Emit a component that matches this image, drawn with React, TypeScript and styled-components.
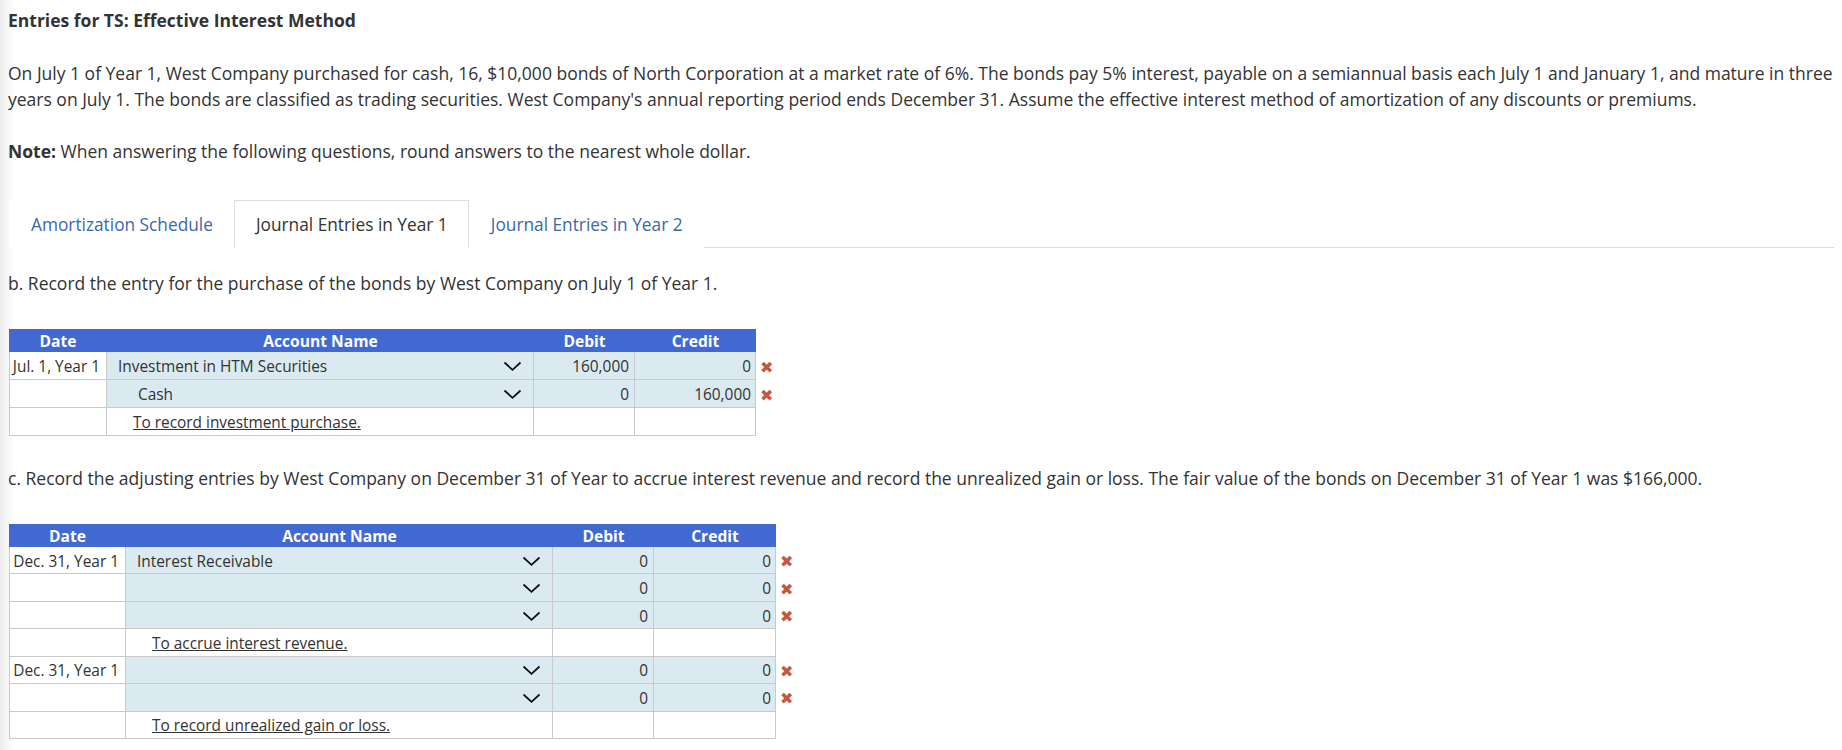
import React from "react";
import styled, { createGlobalStyle } from "styled-components";

const Global = createGlobalStyle`
  html, body { margin: 0; padding: 0; }
  body {
    background: linear-gradient(to right, #ebebeb 0px, #f8f8f8 8px, #ffffff 16px);
    font-family: "Open Sans", "Liberation Sans", sans-serif;
    color: #333333;
    min-height: 750px;
  }
`;

const Page = styled.div`
  padding: 8px 8px 0 8px;
`;

const Title = styled.h1`
  margin: 0;
  font-size: 17.5px;
  font-weight: 700;
  line-height: 24px;
  color: #333;
`;

const Para = styled.p<{ $top: number }>`
  margin: ${(p) => p.$top}px 0 0 0;
  font-size: 17.5px;
  line-height: 26px;
  color: #333;
`;

const TabBar = styled.div`
  margin: 36px 0 0 1px;
  display: flex;
  border-bottom: 1px solid #dddddd;
  height: 47px;
`;

const Tab = styled.div<{ $active?: boolean }>`
  box-sizing: border-box;
  height: 48px;
  padding: 0 20px 0 21px;
  display: flex;
  align-items: center;
  font-size: 17.3px;
  color: ${(p) => (p.$active ? "#333333" : "#3b67ab")};
  background: #fff;
  border: 1px solid ${(p) => (p.$active ? "#dddddd" : "transparent")};
  border-bottom-color: ${(p) => (p.$active ? "#ffffff" : "transparent")};
`;

const Prompt = styled.p<{ $top: number }>`
  margin: ${(p) => p.$top}px 0 0 0;
  font-size: 17.5px;
  line-height: 24px;
  color: #333;
`;

const Table = styled.div<{ $top: number }>`
  margin: ${(p) => p.$top}px 0 0 1px;
  font-size: 15.4px;
`;

const Row = styled.div<{ $cols: string; $h: number }>`
  display: grid;
  grid-template-columns: ${(p) => p.$cols};
  height: ${(p) => p.$h}px;
`;

const HeadCell = styled.div`
  background: #4169d1;
  color: #fff;
  font-weight: 700;
  display: flex;
  align-items: center;
  justify-content: center;
  font-size: 15.6px;
`;

const Cell = styled.div<{ $fill?: boolean; $first?: boolean; $align?: string; $pad?: string }>`
  box-sizing: border-box;
  background: ${(p) => (p.$fill ? "#daeaf0" : "#ffffff")};
  border-right: 1px solid #c9c9c9;
  border-bottom: 1px solid #c9c9c9;
  border-left: ${(p) => (p.$first ? "1px solid #c9c9c9" : "none")};
  display: flex;
  align-items: center;
  justify-content: ${(p) => p.$align || "flex-start"};
  padding: ${(p) => p.$pad || "0"};
  padding-top: 2px;
  white-space: nowrap;
  overflow: hidden;
  color: #333;
`;

const AccountText = styled.span<{ $indent: number }>`
  flex: 1;
  padding-left: ${(p) => p.$indent}px;
`;

const Memo = styled.span`
  padding-left: 15px;
  text-decoration: underline;
  color: #333;
`;

const Chevron = styled.svg`
  width: 19px;
  height: 10px;
  margin-right: 11px;
  margin-bottom: 1px;
  flex: none;
`;

const Mark = styled.div`
  display: flex;
  align-items: center;
  padding: 2px 0 0 4px;
  color: #c8553d;
  font-family: "DejaVu Sans", sans-serif;
  font-size: 16px;
  font-weight: 700;
`;

type Line = {
  date?: string;
  account?: string;
  indent?: number;
  debit?: string;
  credit?: string;
  memo?: string;
};

const Down = () => (
  <Chevron viewBox="0 0 19 10">
    <polyline points="1.5,1.5 9.5,8.8 17.5,1.5" fill="none" stroke="#111" strokeWidth="1.8" />
  </Chevron>
);

function Journal({
  top,
  dateW,
  creditW,
  rowH,
  lines,
}: {
  top: number;
  dateW: number;
  creditW: number;
  rowH: number;
  lines: Line[];
}) {
  const cols = `${dateW}px 427px 101px ${creditW}px 24px`;
  return (
    <Table $top={top}>
      <Row $cols={cols} $h={23}>
        <HeadCell>Date</HeadCell>
        <HeadCell>Account Name</HeadCell>
        <HeadCell>Debit</HeadCell>
        <HeadCell>Credit</HeadCell>
        <div />
      </Row>
      {lines.map((l, i) =>
        l.memo ? (
          <Row key={i} $cols={cols} $h={rowH}>
            <Cell $first $align="flex-end" $pad="0 6px 0 0">
              {l.date}
            </Cell>
            <Cell $pad="0 11px">
              <Memo>{l.memo}</Memo>
            </Cell>
            <Cell />
            <Cell />
            <div />
          </Row>
        ) : (
          <Row key={i} $cols={cols} $h={rowH}>
            <Cell $first $align="flex-end" $pad="0 6px 0 0">
              {l.date}
            </Cell>
            <Cell $fill $pad="0 0 0 11px">
              <AccountText $indent={l.indent || 0}>{l.account}</AccountText>
              <Down />
            </Cell>
            <Cell $fill $align="flex-end" $pad="0 5px">
              {l.debit}
            </Cell>
            <Cell $fill $align="flex-end" $pad="0 4px">
              {l.credit}
            </Cell>
            <Mark>✖</Mark>
          </Row>
        )
      )}
    </Table>
  );
}

export default function App() {
  return (
    <>
      <Global />
      <Page>
        <Title>Entries for TS: Effective Interest Method</Title>
        <Para $top={28}>
          On July 1 of Year 1, West Company purchased for cash, 16, $10,000 bonds of North Corporation at a
          market rate of 6%. The bonds pay 5% interest, payable on a semiannual basis each July 1 and January 1,
          and mature in three years on July 1. The bonds are classified as trading securities. West Company's
          annual reporting period ends December 31. Assume the effective interest method of amortization of any
          discounts or premiums.
        </Para>
        <Para $top={26}>
          <b>Note:</b> When answering the following questions, round answers to the nearest whole dollar.
        </Para>
        <TabBar>
          <Tab>Amortization Schedule</Tab>
          <Tab $active>Journal Entries in Year 1</Tab>
          <Tab>Journal Entries in Year 2</Tab>
        </TabBar>
        <Prompt $top={23}>b. Record the entry for the purchase of the bonds by West Company on July 1 of Year 1.</Prompt>
        <Journal
          top={34}
          dateW={98}
          creditW={121}
          rowH={28}
          lines={[
            { date: "Jul. 1, Year 1", account: "Investment in HTM Securities", debit: "160,000", credit: "0" },
            { account: "Cash", indent: 20, debit: "0", credit: "160,000" },
            { memo: "To record investment purchase." },
          ]}
        />
        <Prompt $top={30}>
          c. Record the adjusting entries by West Company on December 31 of Year to accrue interest revenue and
          record the unrealized gain or loss. The fair value of the bonds on December 31 of Year 1 was $166,000.
        </Prompt>
        <Journal
          top={34}
          dateW={117}
          creditW={122}
          rowH={27.43}
          lines={[
            { date: "Dec. 31, Year 1", account: "Interest Receivable", debit: "0", credit: "0" },
            { account: "", debit: "0", credit: "0" },
            { account: "", debit: "0", credit: "0" },
            { memo: "To accrue interest revenue." },
            { date: "Dec. 31, Year 1", account: "", debit: "0", credit: "0" },
            { account: "", debit: "0", credit: "0" },
            { memo: "To record unrealized gain or loss." },
          ]}
        />
      </Page>
    </>
  );
}
